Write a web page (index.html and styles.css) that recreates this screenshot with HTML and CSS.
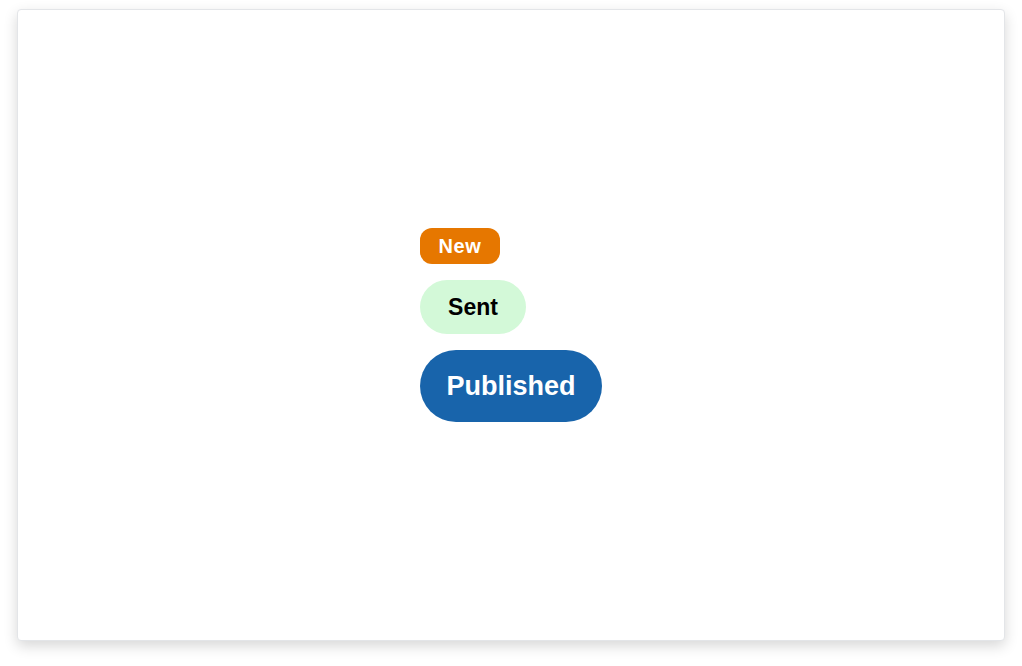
FILE: index.html
```html
<!DOCTYPE html>
<html>
<head>
<meta charset="utf-8">
<link rel="stylesheet" href="styles.css">
</head>
<body>
<div class="card">
  <div class="stack">
    <span class="badge badge-new">New</span>
    <span class="badge badge-sent">Sent</span>
    <span class="badge badge-published">Published</span>
  </div>
</div>
</body>
</html>
```

FILE: styles.css
```css
html, body {
  margin: 0;
  padding: 0;
  background: #ffffff;
}
body {
  padding: 9px 17px 25px 17px;
  font-family: "Liberation Sans", Arial, sans-serif;
}
.card {
  box-sizing: border-box;
  width: 988px;
  height: 632px;
  background: #ffffff;
  border: 1px solid #e3e5e8;
  border-radius: 4px;
  box-shadow: 0 5px 14px rgba(0, 0, 0, 0.16);
  display: flex;
  align-items: center;
  justify-content: center;
}
.stack {
  display: flex;
  flex-direction: column;
  align-items: flex-start;
  gap: 16px;
  width: 182px;
}
.badge {
  display: inline-flex;
  align-items: center;
  justify-content: center;
  font-weight: bold;
  box-sizing: border-box;
  white-space: nowrap;
}
.badge-new {
  width: 80px;
  height: 36px;
  font-size: 20px;
  letter-spacing: 0.6px;
  background: #e67700;
  color: #ffffff;
  border-radius: 12px;
}
.badge-sent {
  width: 106px;
  height: 54px;
  font-size: 23px;
  background: #d3f9d8;
  color: #000000;
  border-radius: 27px;
}
.badge-published {
  width: 182px;
  height: 72px;
  font-size: 27px;
  background: #1864ab;
  color: #ffffff;
  border-radius: 36px;
}
```
